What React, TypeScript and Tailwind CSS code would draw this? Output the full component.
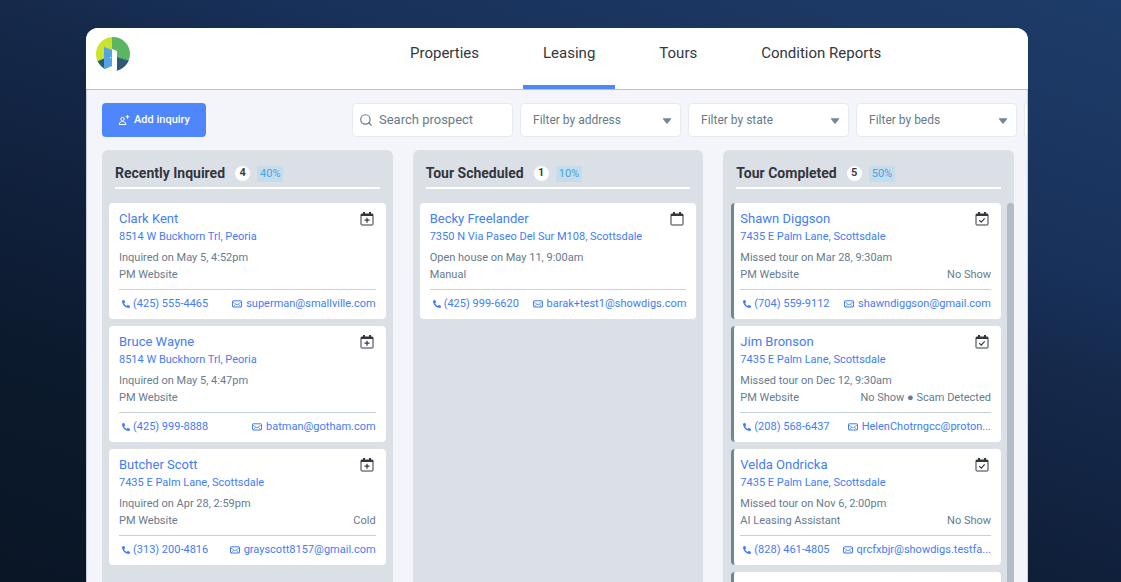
import { Search } from "lucide-react";
import { FaPhoneAlt } from "react-icons/fa";

type Marker = "plus" | "check" | "none";

type Prospect = {
  name: string;
  address: string;
  event: string;
  source: string;
  flags?: string[];
  phone: string;
  email: string;
};

type Stage = {
  title: string;
  count: number;
  share: string;
  marker: Marker;
  scrolls?: boolean;
  prospects: Prospect[];
};

const tabs = ["Properties", "Leasing", "Tours", "Condition Reports"];

const filters = ["Filter by address", "Filter by state", "Filter by beds"];

const stages: Stage[] = [
  {
    title: "Recently Inquired",
    count: 4,
    share: "40%",
    marker: "plus",
    prospects: [
      { name: "Clark Kent", address: "8514 W Buckhorn Trl, Peoria", event: "Inquired on May 5, 4:52pm", source: "PM Website", phone: "(425) 555-4465", email: "superman@smallville.com" },
      { name: "Bruce Wayne", address: "8514 W Buckhorn Trl, Peoria", event: "Inquired on May 5, 4:47pm", source: "PM Website", phone: "(425) 999-8888", email: "batman@gotham.com" },
      { name: "Butcher Scott", address: "7435 E Palm Lane, Scottsdale", event: "Inquired on Apr 28, 2:59pm", source: "PM Website", flags: ["Cold"], phone: "(313) 200-4816", email: "grayscott8157@gmail.com" },
    ],
  },
  {
    title: "Tour Scheduled",
    count: 1,
    share: "10%",
    marker: "none",
    prospects: [
      { name: "Becky Freelander", address: "7350 N Via Paseo Del Sur M108, Scottsdale", event: "Open house on May 11, 9:00am", source: "Manual", phone: "(425) 999-6620", email: "barak+test1@showdigs.com" },
    ],
  },
  {
    title: "Tour Completed",
    count: 5,
    share: "50%",
    marker: "check",
    scrolls: true,
    prospects: [
      { name: "Shawn Diggson", address: "7435 E Palm Lane, Scottsdale", event: "Missed tour on Mar 28, 9:30am", source: "PM Website", flags: ["No Show"], phone: "(704) 559-9112", email: "shawndiggson@gmail.com" },
      { name: "Jim Bronson", address: "7435 E Palm Lane, Scottsdale", event: "Missed tour on Dec 12, 9:30am", source: "PM Website", flags: ["No Show", "Scam Detected"], phone: "(208) 568-6437", email: "HelenChotrngcc@proton..." },
      { name: "Velda Ondricka", address: "7435 E Palm Lane, Scottsdale", event: "Missed tour on Nov 6, 2:00pm", source: "AI Leasing Assistant", flags: ["No Show"], phone: "(828) 461-4805", email: "qrcfxbjr@showdigs.testfa..." },
    ],
  },
];

function Logo() {
  return (
    <svg viewBox="0 0 34 34" className="h-[34px] w-[34px]" aria-label="Showdigs" role="img">
      <clipPath id="disc">
        <circle cx="17" cy="17" r="17" />
      </clipPath>
      <g clipPath="url(#disc)">
        <path d="M0 0h16v34H0z" fill="#c9e42b" />
        <path d="M16 0h18v34H16z" fill="#5cb563" />
        <path d="M0 25l9-4v13H0z" fill="#31587a" />
        <path d="M20 20l14 4v10H20z" fill="#31587a" />
        <path d="M16 12l5 2v20H8v-2l8-3z" fill="#fff" />
        <path d="M8 10l8 3v16l-8 3.500z" fill="#52a5e0" />
        <circle cx="14.500" cy="20.500" r=".8" fill="#d5ecfb" />
      </g>
    </svg>
  );
}

function AddPersonIcon() {
  return (
    <svg viewBox="0 0 12 12" className="h-3 w-3" fill="none" stroke="currentColor" strokeWidth="1">
      <circle cx="4.500" cy="5" r="1.700" />
      <path d="M1.200 10.500c.3-2.200 1.500-3 3.300-3s3 .8 3.300 3zM9.500 1v3.600M7.700 2.800h3.600" />
    </svg>
  );
}

function CalendarIcon({ marker }: { marker: Marker }) {
  return (
    <svg viewBox="0 0 14 14" className="h-[14px] w-[14px]" fill="none" stroke="#33363d" strokeWidth="1">
      <rect x="1" y="2" width="12" height="11" rx=".8" />
      <path d="M1 3h12" strokeWidth="2" />
      <path d="M4 0v3M10 0v3" strokeWidth="2" />
      {marker === "plus" && <path d="M7 5.700v5M4.500 8.200h5" strokeWidth="1.200" />}
      {marker === "check" && <path d="M4.300 8.200l1.900 1.900 3.500-3.700" strokeWidth="1.200" />}
    </svg>
  );
}

function MailIcon() {
  return (
    <svg viewBox="0 0 10 8" className="h-2 w-[10px] shrink-0" fill="none" stroke="currentColor" strokeWidth="1">
      <rect x=".5" y=".8" width="9" height="6.200" rx=".6" />
      <path d="M.8 2L5 4.800 9.200 2M1 7l2.800-3M9 7L6.200 4" strokeWidth=".7" />
    </svg>
  );
}

function ProspectCard({ prospect, marker }: { prospect: Prospect; marker: Marker }) {
  return (
    <article
      className={`rounded bg-white pt-[7px] pr-[10px] pb-[6px] text-[11px] text-[#667b8d] ${
        marker === "check" ? "border-l-[3px] border-[#718596] pl-[6px]" : "pl-[10px]"
      }`}
    >
      <div className="flex items-center justify-between">
        <a href="#" className="text-[13px] leading-[18px] text-[#437cf7]">
          {prospect.name}
        </a>
        <button type="button" aria-label="Schedule tour" className="mr-[2px]">
          <CalendarIcon marker={marker} />
        </button>
      </div>
      <a href="#" className="block leading-[18px] text-[#437cf7]">
        {prospect.address}
      </a>
      <p className="mt-[3px] leading-[17px]">{prospect.event}</p>
      <div className="flex justify-between leading-[17px]">
        <span>{prospect.source}</span>
        {prospect.flags && <span>{prospect.flags.join(" ● ")}</span>}
      </div>
      <div className="mt-[6px] flex items-center justify-between border-t border-[#c9d1da] pt-[5px] leading-[18px] text-[#437cf7]">
        <a href="#" className="flex items-center gap-[3px] pl-[3px] whitespace-nowrap">
          <FaPhoneAlt className="h-2 w-2" />
          {prospect.phone}
        </a>
        <a href="#" className="flex items-center gap-1 whitespace-nowrap">
          <MailIcon />
          {prospect.email}
        </a>
      </div>
    </article>
  );
}

function StageColumn({ stage }: { stage: Stage }) {
  return (
    <section className="flex min-w-0 flex-1 flex-col rounded-t-md bg-[#dbe0e7]">
      <header className="mx-[13px] flex h-[39px] items-center border-b-2 border-white pt-[10px]">
        <h2 className="text-[14px] font-bold text-[#33363d]">{stage.title}</h2>
        <span className="ml-[10px] flex h-[15px] w-[15px] items-center justify-center rounded-full bg-white text-[11px] font-semibold text-[#33363d]">
          {stage.count}
        </span>
        <span className="ml-[7px] bg-[#c6dcea] px-[3px] text-[11px] leading-[16px] text-[#4aa3df]">{stage.share}</span>
      </header>
      <div className="mt-[14px] flex flex-1">
        <div className={`flex min-w-0 flex-1 flex-col gap-[7px] ${stage.scrolls ? "pr-[6px] pl-2" : "px-[7px]"}`}>
          {stage.prospects.map((p) => (
            <ProspectCard key={p.name} prospect={p} marker={stage.marker} />
          ))}
          {/* next card, cut off by the fold */}
          {stage.scrolls && <div className="h-20 rounded border-l-[3px] border-[#718596] bg-white" />}
        </div>
        {stage.scrolls && <div className="w-[7px] rounded-t bg-[#b0bcc8]" />}
      </div>
    </section>
  );
}

export default function App() {
  return (
    <div className="flex h-screen justify-center overflow-hidden bg-[linear-gradient(199deg,#1e3c69_0%,#18315a_30%,#15294b_40%,#10203b_60%,#0c1a2d_75%,#0a1626_100%)] pt-7 pr-[93px] pl-[86px] font-[Roboto,sans-serif]">
      <div className="flex min-w-0 flex-1 flex-col overflow-hidden rounded-t-xl bg-[#f4f5fa]">
        <header className="flex h-[62px] shrink-0 border-b border-[#b5c0d0] bg-white pl-[10px]">
          <div className="w-[294px] shrink-0 pt-[9px]">
            <Logo />
          </div>
          <nav className="flex gap-6 text-[15px] leading-[22px] text-[#33363d]">
            {tabs.map((t) => (
              <a key={t} href="#" className={`flex px-5 pt-[14px] ${t === "Leasing" ? "border-b-4 border-[#4f86f9]" : ""}`}>
                {t}
              </a>
            ))}
          </nav>
        </header>

        <div className="flex flex-1 flex-col border-x border-[#c6cfdb] pl-[15px]">
          <div className="flex shrink-0 justify-between pt-[13px]">
            <button type="button" className="flex h-[34px] w-[104px] items-center justify-center gap-1 rounded bg-[#4f86fc] text-[11px] font-medium text-white">
              <AddPersonIcon />
              Add inquiry
            </button>
            <div className="flex gap-[7px] text-[12px] text-[#667b8d]">
              <label className="flex h-[34px] w-[161px] items-center gap-[6px] rounded border border-[#e6e9f0] bg-white px-[6px]">
                <Search className="h-[14px] w-[14px] shrink-0" strokeWidth={2} />
                <input
                  type="text"
                  aria-label="Search prospect"
                  placeholder="Search prospect"
                  className="w-full min-w-0 text-[13px] outline-none placeholder:text-[#667b8d]"
                />
              </label>
              {filters.map((f) => (
                <div key={f} className="relative">
                  <select aria-label={f} className="h-[34px] w-[161px] appearance-none rounded border border-[#e6e9f0] bg-white pl-3">
                    <option>{f}</option>
                  </select>
                  <svg viewBox="0 0 10 6" className="pointer-events-none absolute top-[15px] right-[9px] h-[6px] w-[10px]" fill="#718596">
                    <path d="M1.200.3h7.600q.8 0 .3.700L5.500 5.400q-.5.500-1 0L.9 1Q.4.3 1.200.3z" />
                  </svg>
                </div>
              ))}
              <div className="w-[3px] rounded-l border border-r-0 border-[#e6e9f0] bg-white" />
            </div>
          </div>

          <main className="mt-[13px] flex flex-1 gap-5 pr-[13px]">
            {stages.map((s) => (
              <StageColumn key={s.title} stage={s} />
            ))}
          </main>
        </div>
      </div>
    </div>
  );
}
